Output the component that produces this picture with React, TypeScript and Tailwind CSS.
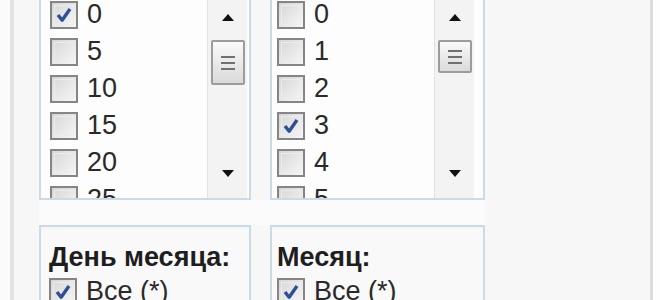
import React from 'react';

const minutes = ['0', '5', '10', '15', '20', '25'];
const hours = ['0', '1', '2', '3', '4', '5'];

function Box({ checked }: { checked?: boolean }) {
  return (
    <span className="w-[28px] h-[28px] shrink-0 border-2 border-[#858585] bg-gradient-to-br from-[#d6d6d6] to-[#f7f7f7] flex items-center justify-center">
      <span className="w-[20px] h-[20px] border border-[#ececec] flex items-center justify-center">
        {checked && (
          <svg viewBox="0 0 24 24" className="w-[22px] h-[22px]">
            <path d="M4 12 L9.5 19 L20 4" fill="none" stroke="#2f4f95" strokeWidth="4.5" strokeLinejoin="round" />
          </svg>
        )}
      </span>
    </span>
  );
}

function Arrow({ up }: { up?: boolean }) {
  return (
    <svg viewBox="0 0 12 7" className="w-[12px] h-[7px]">
      <path d={up ? 'M0 7 L6 0 L12 7 Z' : 'M0 0 L12 0 L6 7 Z'} fill="#111" />
    </svg>
  );
}

function Scrollbar({ thumb }: { thumb: string }) {
  return (
    <div className="w-[40px] shrink-0 bg-[#f3f3f3] border-l border-[#e2e2e2] flex flex-col items-center">
      <div className="h-[42px] w-full flex items-center justify-center">
        <Arrow up />
      </div>
      <div className={`${thumb} mt-[2px] w-[34px] border-2 border-[#9c9c9c] rounded-[2px] bg-gradient-to-b from-[#fafafa] to-[#dadada] flex flex-col items-center justify-center gap-[4px]`}>
        <span className="w-[14px] h-[2px] bg-[#707070]" />
        <span className="w-[14px] h-[2px] bg-[#707070]" />
        <span className="w-[14px] h-[2px] bg-[#707070]" />
      </div>
      <div className="flex-1" />
      <div className="h-[40px] w-full flex justify-center pt-[12px]">
        <Arrow />
      </div>
    </div>
  );
}

function ListPanel({ items, checkedItem, width, pad, thumb, gapRight }: { items: string[]; checkedItem: string; width: string; pad: string; thumb: string; gapRight: string }) {
  return (
    <div className={`${width} h-[206px] border-2 border-[#cadbe6] bg-[#fdfdfd] flex overflow-hidden`}>
      <div className={`flex-1 ${pad}`}>
        {items.map(v => (
          <div key={v} className="h-[37px] flex items-center gap-[9px]">
            <Box checked={v === checkedItem} />
            <span className="text-[27px] leading-none text-[#2a2a2a]">{v}</span>
          </div>
        ))}
      </div>
      <Scrollbar thumb={thumb} />
      <div className={gapRight} />
    </div>
  );
}

function FieldPanel({ title, width, pad }: { title: string; width: string; pad: string }) {
  return (
    <div className={`${width} h-[90px] border-2 border-[#cadbe6] bg-[#f9f9f9]`}>
      <div className={`h-full border-t-2 border-[#f1f6f9] ${pad} pt-[12px]`}>
        <div className="text-[27px] font-bold leading-[32px] text-[#1e1e1e]">{title}</div>
        <div className="h-[37px] flex items-center gap-[9px]">
          <Box checked />
          <span className="text-[27px] leading-none text-[#2a2a2a]">Все (*)</span>
        </div>
      </div>
    </div>
  );
}

export default function App() {
  return (
    <div className="w-[660px] h-[300px] overflow-hidden flex bg-[#f7f7f7] text-[#222] font-['Liberation_Sans',Arial,sans-serif]">
      <div className="w-[10px] shrink-0 bg-[#fbfbfb]" />
      <div className="w-[4px] shrink-0 bg-[#e3e3e3]" />
      <div className="flex-1 pl-[25px]">
        <div className="flex gap-[19px] -mt-[6px]">
          <ListPanel items={minutes} checkedItem="0" width="w-[212px]" pad="pl-[9px]" thumb="h-[45px]" gapRight="w-[2px]" />
          <ListPanel items={hours} checkedItem="3" width="w-[215px]" pad="pl-[5px]" thumb="h-[33px]" gapRight="w-[9px]" />
        </div>
        <div className="h-[25px] bg-[#fbfbfb] w-[446px]" />
        <div className="flex gap-[19px]">
          <FieldPanel title="День месяца:" width="w-[212px]" pad="pl-[8px]" />
          <FieldPanel title="Месяц:" width="w-[215px]" pad="pl-[5px]" />
        </div>
      </div>
      <div className="w-[3px] shrink-0 bg-[#dcdcdc]" />
      <div className="w-[7px] shrink-0 bg-[#fdfdfd]" />
    </div>
  );
}
